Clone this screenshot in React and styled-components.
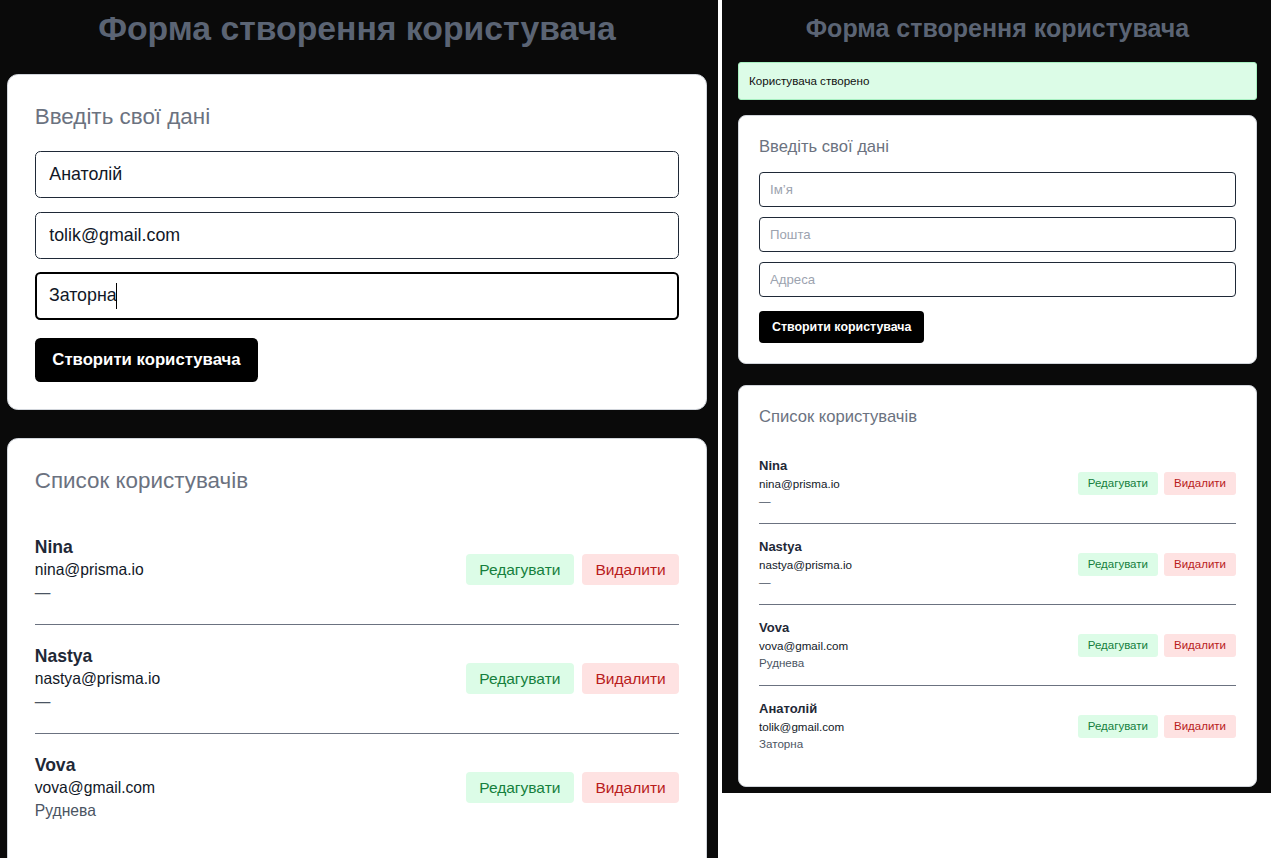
import React from 'react'
import styled, { createGlobalStyle } from 'styled-components'

const GlobalStyle = createGlobalStyle`
  html, body {
    margin: 0;
    padding: 0;
    background: #fff;
  }
  body {
    font-family: "Liberation Sans", Arial, sans-serif;
  }
  * {
    box-sizing: border-box;
  }
`

const firstUsers = [
  { name: 'Nina', email: 'nina@prisma.io', address: '' },
  { name: 'Nastya', email: 'nastya@prisma.io', address: '' },
  { name: 'Vova', email: 'vova@gmail.com', address: 'Руднева' },
]

const allUsers = [
  ...firstUsers,
  { name: 'Анатолій', email: 'tolik@gmail.com', address: 'Заторна' },
]

const App = () => {
  return (
    <>
      <GlobalStyle />
      <Desktop>
        <Frame $width="718px" $height="858px">
          <Screen
            zoom={1.35}
            pad="5px 8px 0 5px"
            users={firstUsers}
            values={['Анатолій', 'tolik@gmail.com', 'Заторна']}
            focused={2}
          />
        </Frame>
        <Frame $width="549px">
          <Screen
            zoom={1}
            pad="12px 14px 6px 16px"
            users={allUsers}
            values={['', '', '']}
            alert="Користувача створено"
          />
        </Frame>
      </Desktop>
    </>
  )
}

export default App

const placeholders = ['Ім’я', 'Пошта', 'Адреса']

const Screen = ({ zoom, pad, users, values, focused, alert }) => {
  return (
    <Page $zoom={zoom} $pad={pad}>
      <Title>Форма створення користувача</Title>
      {alert && <Alert>{alert}</Alert>}
      <Card>
        <CardTitle>Введіть свої дані</CardTitle>
        <Form onSubmit={e => e.preventDefault()}>
          {placeholders.map((ph, i) => (
            <Field key={ph}>
              <Input
                $focused={focused === i}
                placeholder={ph}
                defaultValue={values[i]}
                readOnly
              />
              {focused === i && <Caret />}
            </Field>
          ))}
          <SubmitButton type="submit">Створити користувача</SubmitButton>
        </Form>
      </Card>
      <Card $gap="21px">
        <CardTitle $mb="14px">Список користувачів</CardTitle>
        <List>
          {users.map(u => (
            <Row key={u.email}>
              <Info>
                <Name>{u.name}</Name>
                <Email>{u.email}</Email>
                <Address>{u.address || '—'}</Address>
              </Info>
              <Actions>
                <SmallButton $bg="#dcfce7" $color="#15803d">Редагувати</SmallButton>
                <SmallButton $bg="#fee2e2" $color="#b91c1c">Видалити</SmallButton>
              </Actions>
            </Row>
          ))}
        </List>
      </Card>
    </Page>
  )
}

const Desktop = styled.div`
  display: flex;
  align-items: flex-start;
  gap: 4px;
  width: 1288px;
  height: 858px;
  overflow: hidden;
`

const Frame = styled.div`
  flex: none;
  width: ${props => props.$width};
  height: ${props => props.$height || 'auto'};
  background: #0a0a0a;
  overflow: hidden;
`

const Page = styled.div`
  zoom: ${props => props.$zoom};
  padding: ${props => props.$pad};
  display: flex;
  flex-direction: column;
`

const Title = styled.h1`
  margin: 0 0 18px 0;
  font-size: 25px;
  line-height: 32px;
  font-weight: 700;
  text-align: center;
  color: #5b6474;
`

const Alert = styled.div`
  margin-bottom: 15px;
  padding: 11px 10px;
  font-size: 11.6px;
  line-height: 14px;
  color: #111;
  background: #dcfce7;
  border: 1px solid #a7efc0;
  border-radius: 3px;
`

const Card = styled.section`
  margin-top: ${props => props.$gap || '0'};
  padding: 19px 20px 20px 20px;
  background: #fff;
  border: 1px solid #d1d5db;
  border-radius: 8px;
`

const CardTitle = styled.h2`
  margin: 0 0 ${props => props.$mb || '13px'} 0;
  font-size: 16.6px;
  line-height: 24px;
  font-weight: 400;
  color: #6b7280;
`

const Form = styled.form`
  display: flex;
  flex-direction: column;
  gap: 10px;
`

const Field = styled.div`
  position: relative;
`

const Input = styled.input`
  display: block;
  width: 100%;
  height: 35px;
  padding: 0 ${props => (props.$focused ? '9px' : '10px')};
  font-family: inherit;
  font-size: 13.2px;
  color: #111827;
  background: #fff;
  border: ${props => (props.$focused ? '2px solid #000' : '1px solid #1f2937')};
  border-radius: 4px;
  outline: none;
  &::placeholder {
    color: #9ca3af;
  }
`

const Caret = styled.span`
  position: absolute;
  left: 60px;
  top: 8px;
  width: 1px;
  height: 19px;
  background: #000;
`

const SubmitButton = styled.button`
  align-self: flex-start;
  margin-top: 4px;
  height: 32px;
  padding: 0 13px;
  font-family: inherit;
  font-size: 12.4px;
  font-weight: 700;
  color: #fff;
  background: #000;
  border: none;
  border-radius: 4px;
`

const List = styled.ul`
  margin: 0;
  padding: 0;
  list-style: none;
`

const Row = styled.li`
  display: flex;
  align-items: center;
  justify-content: space-between;
  padding: 14px 0;
  border-bottom: 1px solid #6b7280;
  &:last-child {
    border-bottom: none;
  }
`

const Info = styled.div`
  display: flex;
  flex-direction: column;
`

const Name = styled.span`
  font-size: 13px;
  line-height: 18px;
  font-weight: 700;
  color: #1f2937;
`

const Email = styled.span`
  font-size: 11.6px;
  line-height: 17px;
  color: #111827;
`

const Address = styled.span`
  font-size: 11.6px;
  line-height: 17px;
  color: #4b5563;
`

const Actions = styled.div`
  display: flex;
  gap: 6px;
`

const SmallButton = styled.button`
  height: 23px;
  padding: 0 10px;
  font-family: inherit;
  font-size: 11.5px;
  color: ${props => props.$color};
  background: ${props => props.$bg};
  border: none;
  border-radius: 3px;
`
